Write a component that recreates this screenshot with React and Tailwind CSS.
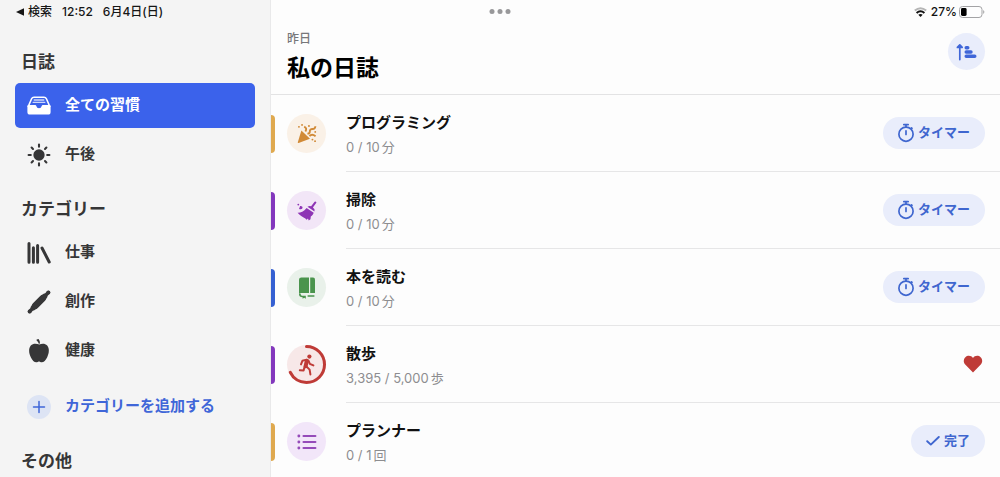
import React, { useState } from 'react';

const InboxIcon = () => (
  <svg width="24" height="24" viewBox="0 0 24 24" fill="none">
    <path d="M1 13 4.6 4.8Q5.3 3.2 7 3.2H17Q18.7 3.2 19.4 4.8L23 13" stroke="currentColor" strokeWidth="1.6" />
    <path d="M7.2 6H16.8M6.2 8.4H17.8" stroke="currentColor" strokeWidth="1.3" strokeLinecap="round" opacity="0.75" />
    <path d="M.4 12.2Q.4 11 1.6 11H8.2Q9 11 9.3 12 9.8 14.2 12 14.2T14.7 12Q15 11 15.8 11H22.4Q23.6 11 23.6 12.2V18Q23.6 20.6 21 20.6H3Q.4 20.6.4 18Z" fill="currentColor" />
  </svg>
);

const SunIcon = () => (
  <svg width="24" height="24" viewBox="0 0 24 24" stroke="currentColor" strokeWidth="2.1" strokeLinecap="round">
    <circle cx="12" cy="12" r="4.6" fill="currentColor" />
    <path d="M12 1.6V3.8M12 20.2V22.4M1.6 12H3.8M20.2 12H22.4M4.6 4.6 6 6M18 18 19.4 19.4M4.6 19.4 6 18M18 6 19.4 4.6" />
  </svg>
);

const BooksIcon = () => (
  <svg width="24" height="24" viewBox="0 0 24 24" stroke="currentColor" strokeWidth="3" strokeLinecap="round">
    <path d="M2 2.4V21.2M6.4 6.8V21.2M10.6 4.6V21.2M15 7 22.2 21" />
  </svg>
);

const RollingPinIcon = () => (
  <svg width="24" height="24" viewBox="0 0 24 24" stroke="currentColor" strokeLinecap="round">
    <path d="M2.6 21.4 21.4 2.6" strokeWidth="3.6" />
    <path d="M2.6 21.4H2.7M21.3 2.6H21.4" strokeWidth="4" />
    <path d="M6.4 17.6 17.6 6.4" strokeWidth="5.4" />
    <path d="M8.4 15.6 15.6 8.4" strokeWidth="6.8" />
  </svg>
);

const AppleIcon = () => (
  <svg width="24" height="24" viewBox="0 0 24 24" fill="currentColor">
    <path d="M12.3 5.6C14.5 4.4 18 4 20.2 6.6C22.6 9.4 22.2 14.2 20.2 18.2C18.6 21.6 16.6 23.6 14 23.2C12.8 23 12.6 22.6 12 22.6S11.2 23 10 23.2C7.4 23.6 5.4 21.6 3.8 18.2C1.8 14.2 1.4 9.4 3.8 6.6C6 4 9.8 4.4 12.3 5.6Z" />
    <path d="M9.6.4 11.6 0Q13.2 2 13 4.6L11.8 4.8Q11.4 2.8 9.6 1.6Z" />
  </svg>
);

const PlusIcon = () => (
  <span className="flex size-6 items-center justify-center rounded-full bg-[#dde4f4]">
    <svg width="14" height="14" viewBox="0 0 14 14" stroke="currentColor" strokeWidth="1.5" strokeLinecap="round">
      <path d="M7 1.5V12.5M1.5 7H12.5" />
    </svg>
  </span>
);

const PartyIcon = () => (
  <svg width="20" height="20" viewBox="0 0 20 20" fill="none" stroke="currentColor">
    <path d="M4.4 6.6 13 14.8 1.6 19Q.6 19.2.8 18.2Z" fill="currentColor" stroke="none" />
    <path d="M7.2 2.6Q10.4 4.2 8.4 7.4M18.4 2.2Q18.2 5 15.6 5Q12.6 5 12.8 7.8Q12.6 9.6 10.4 9.6M12.4 12Q15 9.4 18.6 12.2" strokeWidth="1.9" />
    <path d="M1.9 2.8H2M11.9 2H12M5 .9H5.1M18.2 7.9H18.3M18 17.2H18.1M15.4 15.6H15.5" strokeWidth="1.8" strokeLinecap="round" />
  </svg>
);

const BroomIcon = () => (
  <svg width="20" height="20" viewBox="0 0 20 20" fill="currentColor">
    <path d="M17.6.8Q18.6.2 19.2.9T18.8 2.6L15.9 6.5Q18.3 8.3 17.5 10.4L10.5 5.8Q12.4 4.6 14.1 5.3Z" />
    <path d="M9.6 7.1 16.7 11.7C16 13.6 15.3 14.6 13.8 15.4L13.5 18.2 11.7 19.4 11 17.6 9.5 18.7 8.4 17.5C6.2 16.3 3.1 14.8.6 11.8 3.4 11.9 6.8 10.8 9.6 7.1Z" />
    <circle cx="1.3" cy="3.6" r=".9" />
    <path d="M3.1 4.9Q5.8 4.7 5.6 6.8T2 8Z" />
  </svg>
);

const BookIcon = () => (
  <svg width="20" height="22" viewBox="0 0 20 22" fill="currentColor">
    <path d="M4.3.6H12V16H3.8Q2 16 2 17.4V2.8Q2 .6 4.3.6Z" />
    <path d="M13.2.6H16Q18 .6 18 2.6V16H13.2Z" />
    <path d="M2 16.4H3.6Q3.6 18.8 5.2 18.8H8.8V21.8L7.2 20.8 5.6 21.8V20.2Q2 20 2 17.2ZM10.6 18.2H17.4V19.8H10.6Z" />
  </svg>
);

const WalkIcon = () => (
  <svg width="20" height="22" viewBox="0 0 20 22" fill="none" stroke="currentColor" strokeLinecap="round" strokeLinejoin="round">
    <circle cx="12.4" cy="2.6" r="2.1" fill="currentColor" stroke="none" />
    <path d="M9.8 7 8.6 12.2" strokeWidth="4" />
    <path d="M4 10.4 5.4 6.8 9.6 5.6 11.6 6.8 12.8 9.8 16.4 11.4M9.4 12.4 12.6 15.6 13.4 20.4M7.6 12.6 6.6 16.4 2.8 16.2" strokeWidth="2" />
  </svg>
);

const ListIcon = () => (
  <svg width="20" height="20" viewBox="0 0 20 20" stroke="currentColor" strokeWidth="2.1" strokeLinecap="round">
    <path d="M6.5 4H18.4M6.5 10H18.4M6.5 16H18.4" />
    <path d="M1.8 4H1.9M1.8 10H1.9M1.8 16H1.9" strokeWidth="2.8" />
  </svg>
);

const TimerIcon = () => (
  <svg width="16" height="20" viewBox="0 0 16 20" fill="none" stroke="currentColor" strokeWidth="1.7" strokeLinecap="round">
    <circle cx="8" cy="11.2" r="7.1" />
    <path d="M5.8 1.6H10.2M8 1.8V4M8 7.8V11.4M13.4 4.8 14 5.4" />
  </svg>
);

const CheckIcon = () => (
  <svg width="14" height="12" viewBox="0 0 14 12" fill="none" stroke="currentColor" strokeWidth="1.9" strokeLinecap="round" strokeLinejoin="round">
    <path d="M1.2 6.2 4.8 9.6 12.8 2" />
  </svg>
);

const HeartIcon = () => (
  <svg width="20" height="18" viewBox="0 0 20 18" fill="currentColor">
    <path d="M10 3C11.6.4 15.4 0 17.6 2.2C19.8 4.4 19.6 7.6 17.8 9.4L10 17.4 2.2 9.4C.4 7.6.2 4.4 2.4 2.2C4.6 0 8.4.4 10 3Z" />
  </svg>
);

const SortIcon = () => (
  <svg width="22" height="18" viewBox="0 0 22 18" fill="none" stroke="currentColor" strokeLinecap="round">
    <path d="M3.8 2.6V16.6M1.4 4.4 3.8 1.8 6.2 4.4Z" strokeWidth="1.7" strokeLinejoin="round" />
    <path d="M10.2 4.7H11.8M10.2 9H15M10.2 13.3H18.8" strokeWidth="3.4" />
  </svg>
);

const WifiIcon = () => (
  <svg width="13" height="10" viewBox="0 0 13 10" fill="none" stroke="currentColor" strokeWidth="2">
    <path d="M.8 3.6Q6.5-1.2 12.2 3.6" opacity="0.3" />
    <path d="M2.6 6Q6.5 2.4 10.4 6" />
    <path d="M4.3 7.8Q6.5 6 8.7 7.8L6.5 10Z" fill="currentColor" stroke="none" />
  </svg>
);

const BatteryIcon = () => (
  <svg width="26" height="12" viewBox="0 0 26 12" fill="none">
    <rect x=".5" y=".5" width="22.5" height="11" rx="3" stroke="#a3a3a5" />
    <rect x="2" y="2" width="5.6" height="8" rx="1.4" fill="#000" />
    <path d="M24.2 4V8Q25.4 7.2 25.4 6T24.2 4Z" fill="#a3a3a5" />
  </svg>
);

const secciones = [
  {
    titulo: '日誌',
    items: [
      { id: 'all', nombre: '全ての習慣', Icon: InboxIcon },
      { id: 'afternoon', nombre: '午後', Icon: SunIcon },
    ],
  },
  {
    titulo: 'カテゴリー',
    items: [
      { id: 'work', nombre: '仕事', Icon: BooksIcon },
      { id: 'create', nombre: '創作', Icon: RollingPinIcon },
      { id: 'health', nombre: '健康', Icon: AppleIcon },
    ],
  },
];

const habitos = [
  { nombre: 'プログラミング', valor: '0 / 10', unidad: '分', Icon: PartyIcon, barra: 'bg-[#dfa94f]', circulo: 'bg-[#faf1e7] text-[#d18a37]', accion: 'timer' },
  { nombre: '掃除', valor: '0 / 10', unidad: '分', Icon: BroomIcon, barra: 'bg-[#8338bd]', circulo: 'bg-[#f2e6f7] text-[#8e35b5]', accion: 'timer' },
  { nombre: '本を読む', valor: '0 / 10', unidad: '分', Icon: BookIcon, barra: 'bg-[#3560d2]', circulo: 'bg-[#e9f1ea] text-[#4a944d]', accion: 'timer' },
  { nombre: '散歩', valor: '3,395 / 5,000', unidad: '歩', Icon: WalkIcon, barra: 'bg-[#8338bd]', circulo: 'bg-[#f7e8e8] text-[#bf3b37]', accion: 'heart', progreso: 3395 / 5000 },
  { nombre: 'プランナー', valor: '0 / 1', unidad: '回', Icon: ListIcon, barra: 'bg-[#dfa94f]', circulo: 'bg-[#f2e6f9] text-[#954bb9]', accion: 'done' },
];

const ProgressRing = ({ value }) => (
  <svg className="absolute inset-0 size-full -rotate-90" viewBox="0 0 39 39" fill="none">
    <circle cx="19.5" cy="19.5" r="18" stroke="currentColor" strokeWidth="3" strokeLinecap="round" pathLength="100" strokeDasharray={`${value * 100} 100`} />
  </svg>
);

const Accion = ({ tipo }) => {
  if (tipo === 'heart') {
    return (
      <button type="button" aria-label="お気に入り" className="mr-[2px] text-[#bf3b37]">
        <HeartIcon />
      </button>
    );
  }

  return (
    <button type="button" className="flex h-8 items-center gap-1 rounded-full bg-[#e9edfb] px-[15px] text-[13px] font-bold text-[#3f66cf]">
      {tipo === 'timer' ? <TimerIcon /> : <CheckIcon />}
      {tipo === 'timer' ? 'タイマー' : '完了'}
    </button>
  );
};

const Habito = ({ habito }) => {
  const { Icon } = habito;

  return (
    <li className="flex items-center">
      <span className={`h-[38px] w-1 rounded-r-sm ${habito.barra}`} />
      <span className={`relative ml-3 flex size-[39px] items-center justify-center rounded-full ${habito.circulo}`}>
        <Icon />
        {habito.progreso && <ProgressRing value={habito.progreso} />}
      </span>
      <div className="ml-5 flex h-[77px] flex-1 items-center justify-between border-b border-[#e6e6e7] pr-[15px]">
        <div className="pt-[3px]">
          <h2 className="text-[15px] leading-6 font-bold text-[#111]">{habito.nombre}</h2>
          <p className="flex gap-[2px] text-[13px] leading-6 text-[#8d8d90]">
            <span>{habito.valor}</span>
            <span>{habito.unidad}</span>
          </p>
        </div>
        <Accion tipo={habito.accion} />
      </div>
    </li>
  );
};

const Sidebar = ({ activo, setActivo }) => (
  <aside className="w-[271px] shrink-0 overflow-hidden border-r border-[#e9e9ea] bg-[#f4f4f4] px-[15px] text-[#363637]">
    <div className="flex h-6 items-center gap-[10px] text-[12px] font-medium whitespace-nowrap text-[#161616]">
      <span className="flex items-center gap-1">
        <svg width="9" height="8" viewBox="0 0 9 8" fill="currentColor"><path d="M1 4 9 .2V7.8Z" /></svg>
        検索
      </span>
      <span>12:52</span>
      <span>6月4日(日)</span>
    </div>

    <nav className="mt-[17px] flex flex-col gap-[11px]">
      {secciones.map((seccion) => (
        <section key={seccion.titulo}>
          <h2 className="pl-[6px] text-[17px] leading-[42px] font-semibold">{seccion.titulo}</h2>
          <div className="flex flex-col gap-1">
            {seccion.items.map(({ id, nombre, Icon }) => (
              <button
                key={id}
                type="button"
                onClick={() => setActivo(id)}
                className={`flex h-[45px] items-center gap-[14px] rounded-[5px] px-3 text-[15px] font-semibold ${activo === id ? 'bg-[#3b62eb] text-white' : ''}`}
              >
                <Icon />
                {nombre}
              </button>
            ))}
          </div>
        </section>
      ))}
      <button type="button" className="flex h-[45px] items-center gap-[14px] px-3 text-[15px] font-semibold text-[#3f66d8]">
        <PlusIcon />
        カテゴリーを追加する
      </button>
      <h2 className="pl-[6px] text-[17px] leading-[42px] font-semibold">その他</h2>
    </nav>
  </aside>
);

const App = () => {
  const [activo, setActivo] = useState('all');

  return (
    <div className="relative flex h-screen overflow-hidden bg-[#fdfdfd] font-['Inter','Noto_Sans_CJK_JP',sans-serif]" lang="ja">
      <Sidebar activo={activo} setActivo={setActivo} />

      <main className="min-w-0 flex-1 overflow-hidden">
        <header className="border-b border-[#e3e3e4] pr-[15px] pl-4">
          <div className="flex h-6 items-center justify-end gap-1 text-[12px] font-medium text-[#111]">
            <WifiIcon />
            <span className="flex items-center gap-[2px]">
              27%
              <BatteryIcon />
            </span>
          </div>
          <div className="flex h-[70px] items-start justify-between pt-[5px]">
            <div>
              <p className="text-[12px] leading-5 font-medium text-[#77777a]">昨日</p>
              <h1 className="text-[23px] leading-[38px] font-bold text-black">私の日誌</h1>
            </div>
            <button type="button" aria-label="並べ替え" className="mt-1 flex size-[37px] items-center justify-center rounded-full bg-[#e9edfb] text-[#3f66d8]">
              <SortIcon />
            </button>
          </div>
        </header>

        <ul>
          {habitos.map((habito) => (
            <Habito key={habito.nombre} habito={habito} />
          ))}
        </ul>
      </main>

      {/* multitasking dots */}
      <div className="absolute top-[9px] left-1/2 flex -translate-x-1/2 gap-[3px]">
        <span className="size-[5px] rounded-full bg-[#98989a]" />
        <span className="size-[5px] rounded-full bg-[#98989a]" />
        <span className="size-[5px] rounded-full bg-[#98989a]" />
      </div>
    </div>
  );
};

export default App;
